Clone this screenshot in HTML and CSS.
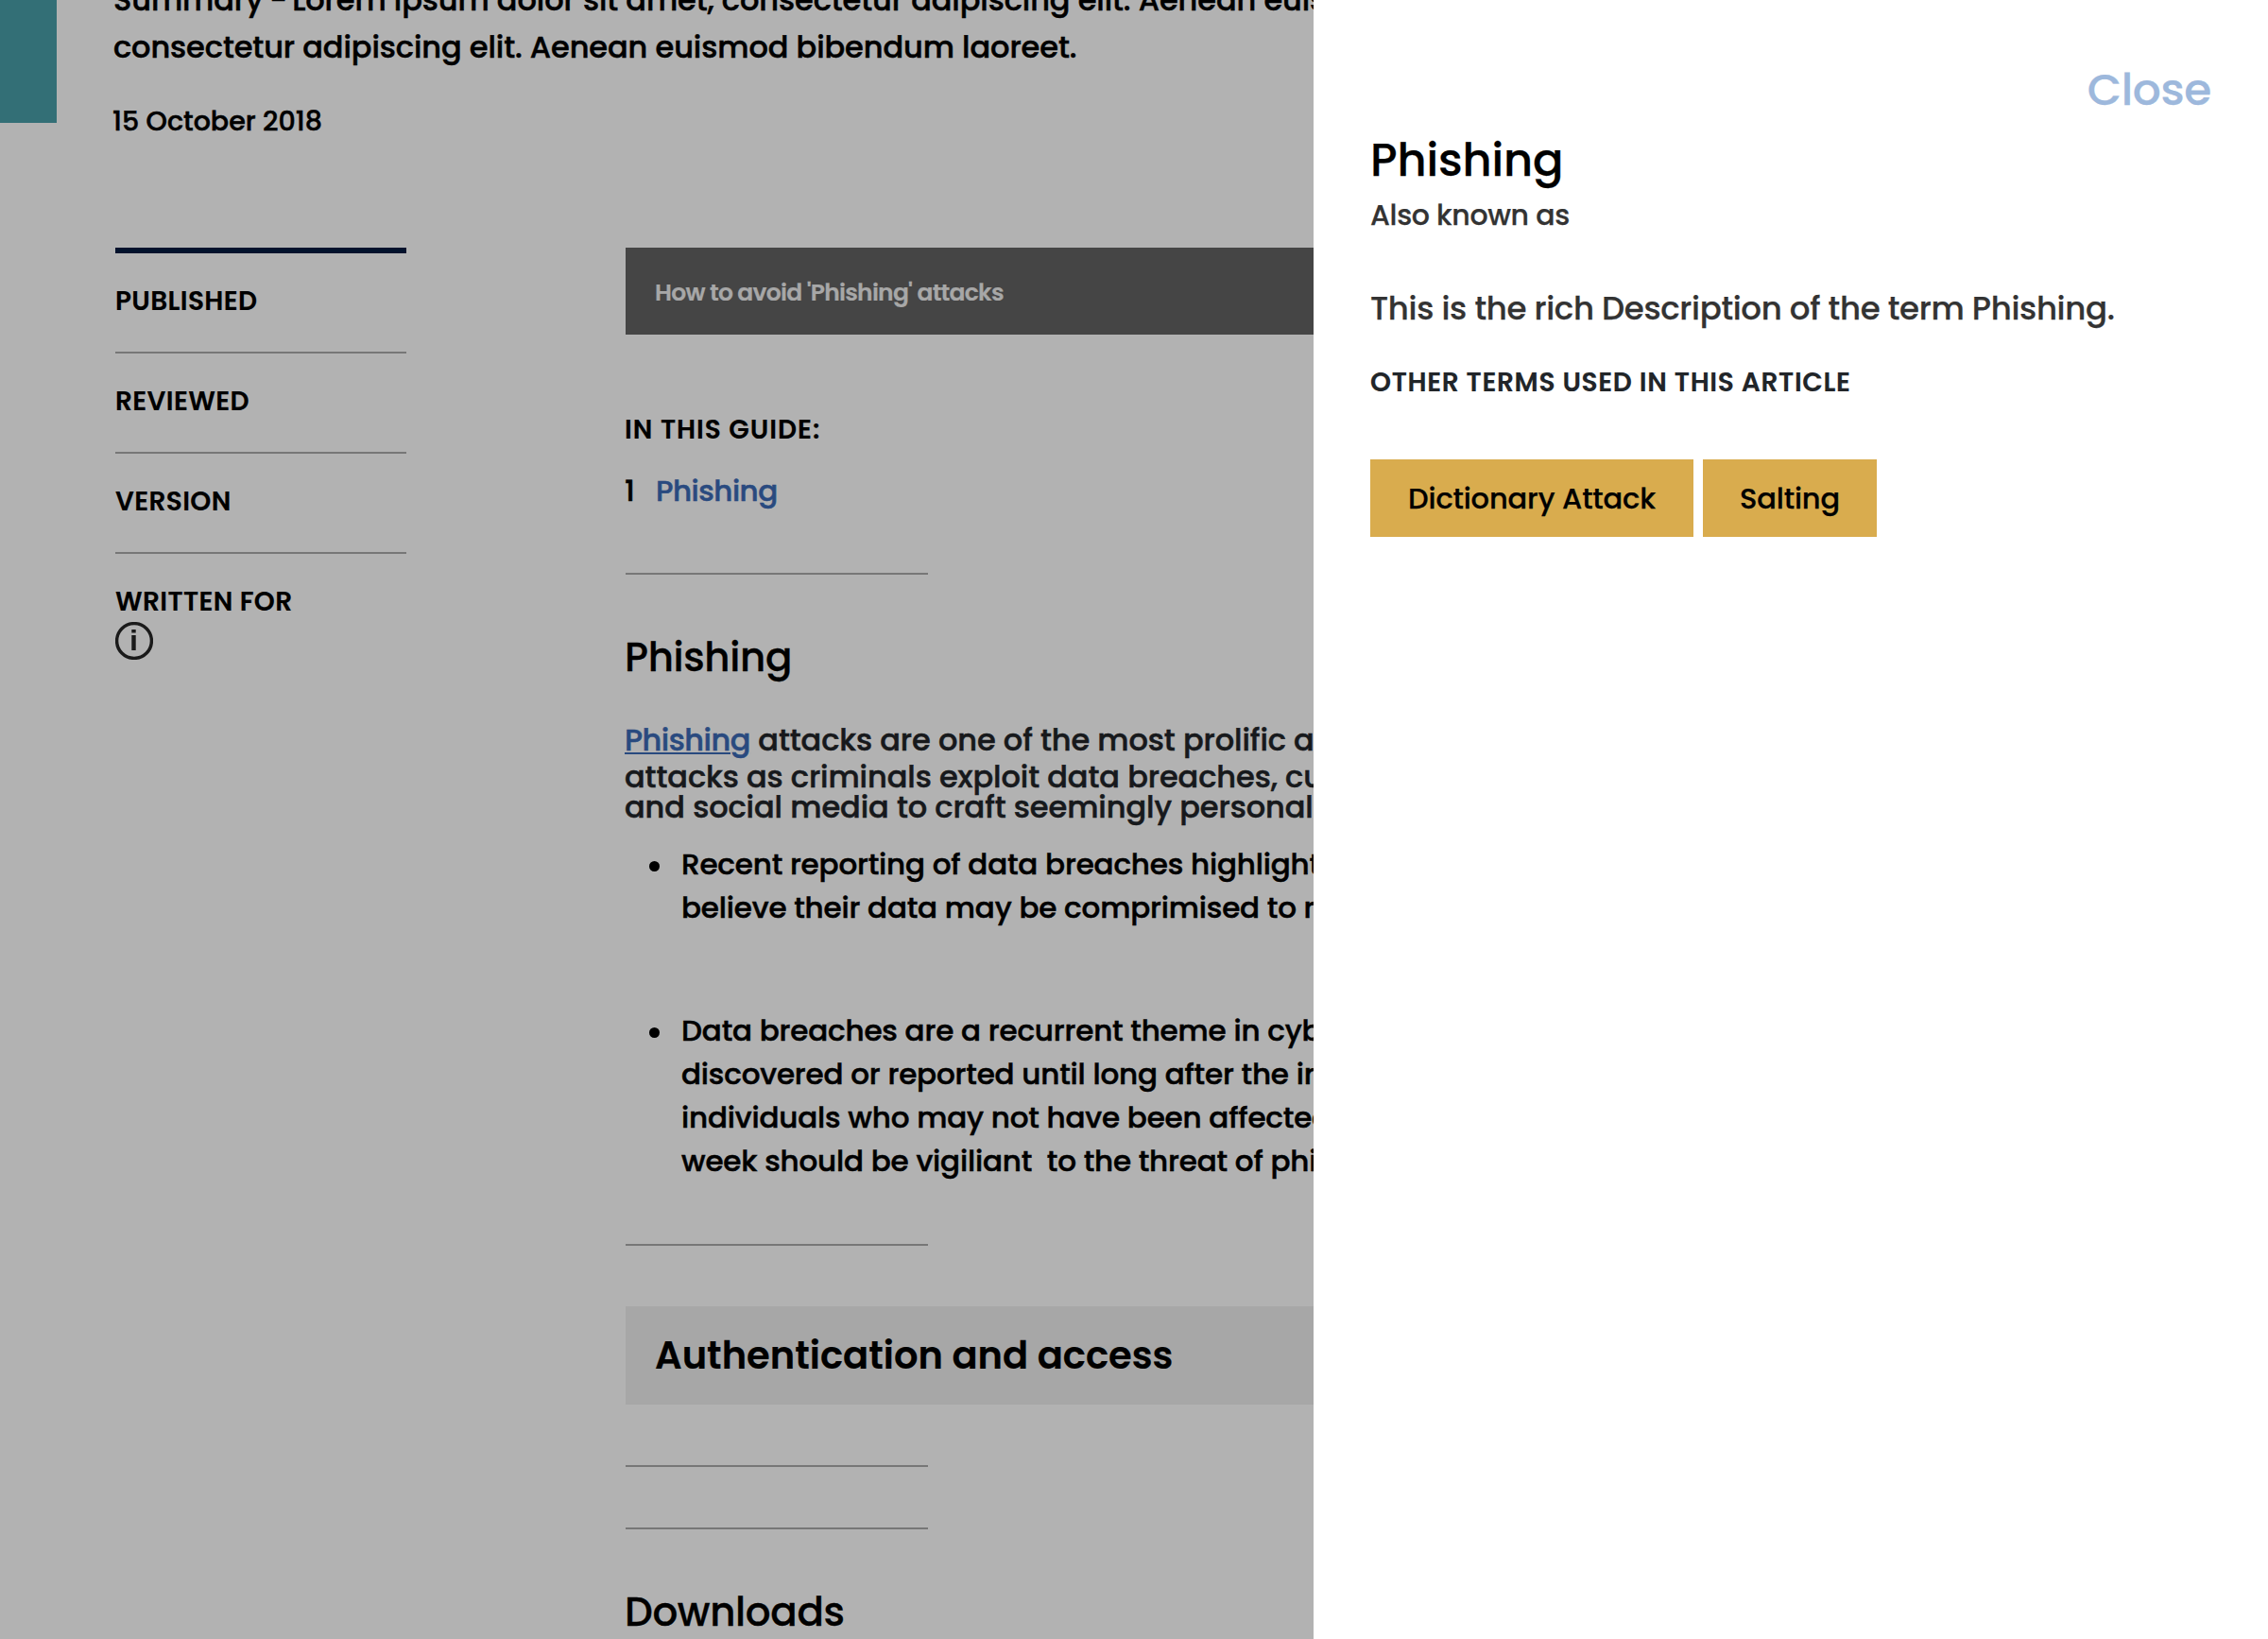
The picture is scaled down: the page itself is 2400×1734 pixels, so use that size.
FILE: index.html
```html
<!DOCTYPE html>
<html lang="en">
<head>
<meta charset="utf-8">
<title>Phishing</title>
<link rel="stylesheet" href="styles.css">
</head>
<body>
<div class="page">
  <header class="intro">
    <div class="accent"></div>
    <div class="intro-body">
      <p class="summary">Summary<span class="dash"> - </span>Lorem ipsum dolor sit amet, consectetur adipiscing elit. Aenean euismod<br>consectetur adipiscing elit. Aenean euismod bibendum laoreet.</p>
      <p class="date">15 October 2018</p>
    </div>
  </header>
  <div class="columns">
    <aside class="meta">
      <div class="meta-item">PUBLISHED</div>
      <div class="meta-item">REVIEWED</div>
      <div class="meta-item">VERSION</div>
      <div class="meta-item">WRITTEN FOR
        <svg class="info" viewBox="0 0 40 40"><circle cx="20" cy="20" r="18.4"/><path d="M19.5 14v16M19.5 8v3.6"/></svg>
      </div>
    </aside>
    <main class="article">
      <div class="banner">How to avoid 'Phishing' attacks</div>
      <h3 class="guide-title">IN THIS GUIDE:</h3>
      <ol class="guide"><li><span>1</span><a>Phishing</a></li></ol>
      <hr>
      <h2>Phishing</h2>
      <p class="lead"><span class="lead-first"><a>Phishing</a> attacks are one of the most prolific and</span><span>attacks as criminals exploit data breaches, current</span><span>and social media to craft seemingly personal</span></p>
      <ul class="points">
        <li>Recent reporting of data breaches highlight<br>believe their data may be comprimised to reset</li>
        <li>Data breaches are a recurrent theme in cyber<br>discovered or reported until long after the incident<br>individuals who may not have been affected<br>week should be vigiliant&nbsp; to the threat of phishing</li>
      </ul>
      <hr>
      <div class="topic">Authentication and access</div>
      <hr>
      <hr>
      <h2>Downloads</h2>
    </main>
  </div>
</div>
<div class="overlay"></div>
<section class="drawer">
  <a class="close">Close</a>
  <h1>Phishing</h1>
  <p class="aka">Also known as</p>
  <p class="description">This is the rich Description of the term Phishing.</p>
  <h3 class="other">OTHER TERMS USED IN THIS ARTICLE</h3>
  <div class="terms"><a class="term term-wide">Dictionary Attack</a><a class="term">Salting</a></div>
</section>
</body>
</html>
```
FILE: styles.css
```css
* { box-sizing: border-box; margin: 0; padding: 0; }
body {
  position: relative;
  width: 2400px;
  height: 1734px;
  overflow: hidden;
  background: #fff;
  color: #000;
  font-family: Poppins, Inter, "Liberation Sans", sans-serif;
  font-weight: 500;
  -webkit-text-stroke: .5px currentColor;
}
ul, ol { list-style: none; }
.page { width: 1390px; height: 1734px; overflow: hidden; white-space: nowrap; }
.intro { display: flex; gap: 60px; height: 262px; align-items: flex-start; }
.accent { flex: none; width: 60px; height: 130px; background: #499fa9; }
.summary { margin-top: -25px; font-size: 32px; line-height: 50px; letter-spacing: -.09px; }
.dash { letter-spacing: -1.6px; }
.date { margin-top: 33px; margin-left: -1px; font-size: 28.5px; line-height: 40px; }
.columns { display: flex; gap: 232px; padding-left: 122px; }
.meta { width: 308px; flex: none; border-top: 6px solid #041a40; }
.meta-item { height: 106px; padding-top: 31px; border-bottom: 2px solid #ababab; font-size: 28px; font-weight: 600; line-height: 40px; letter-spacing: .35px; -webkit-text-stroke: .15px currentColor; }
.meta-item:last-child { border-bottom: 0; height: auto; }
.info { display: block; width: 40px; height: 40px; margin-top: 1px; fill: none; stroke: #262626; stroke-width: 3.4; }
.info path { stroke-width: 4.4; }
.article { width: 1616px; flex: none; }
.banner { display: flex; align-items: center; height: 92px; padding: 3px 30px 0 31px; background: #646464; color: #efefef; font-size: 25px; font-weight: 600; letter-spacing: -.74px; -webkit-text-stroke: .15px currentColor; }
.guide-title { margin: 81px 0 0 -1px; font-size: 28px; font-weight: 600; line-height: 40px; letter-spacing: .95px; -webkit-text-stroke: .15px currentColor; }
.guide { margin: 21px 0 0 -1px; font-size: 31px; line-height: 46px; letter-spacing: -.5px; }
.guide li { display: flex; }
.guide li span { width: 33px; }
.article a { color: #3c6bb7; }
hr { width: 320px; height: 2px; margin-top: 64px; border: 0; background: #ababab; }
h2 { margin: 58px 0 0 -1px; font-size: 42px; font-weight: 500; line-height: 60px; letter-spacing: -.35px; -webkit-text-stroke: .3px currentColor; }
.lead { margin-top: 33px; color: #212529; font-size: 32px; line-height: 32px; letter-spacing: -.08px; }
.lead > span { display: block; margin-left: -1px; }
.lead .lead-first { line-height: 47px; }
.lead a { letter-spacing: -.5px; text-decoration: underline; text-decoration-thickness: 2px; text-underline-offset: 2px; }
.points { margin-top: 21px; font-size: 31px; line-height: 46px; letter-spacing: -.18px; }
.points li { position: relative; padding-left: 59px; }
.points li + li { margin-top: 84px; }
.points li::before { content: ""; position: absolute; left: 25px; top: 20px; width: 11px; height: 11px; border-radius: 50%; background: #000; }
.points + hr { margin-top: 65px; }
.topic { display: flex; align-items: center; height: 104px; margin-top: 64px; padding: 0 31px; background: #f0f0f0; font-size: 40px; font-weight: 600; letter-spacing: .02px; -webkit-text-stroke: .2px currentColor; }
.overlay { position: absolute; inset: 0; background: rgba(0, 0, 0, .3); }
.drawer { position: absolute; top: 0; right: 0; width: 1010px; height: 1734px; padding: 65px 60px 0; background: #fff; -webkit-text-stroke: .25px currentColor; }
.close { display: block; text-align: right; color: #9db8dc; font-size: 47px; line-height: 60px; letter-spacing: -.3px; }
h1 { margin-top: 10px; font-size: 48px; font-weight: 500; line-height: 70px; letter-spacing: -.15px; }
.aka { margin-top: 3px; color: #333; font-size: 30px; line-height: 40px; letter-spacing: -.35px; }
.description { margin-top: 53px; color: #333; font-size: 34px; line-height: 50px; letter-spacing: -.35px; }
.other { margin-top: 34px; color: #212529; font-size: 28px; font-weight: 600; line-height: 40px; letter-spacing: .65px; -webkit-text-stroke: .15px currentColor; }
.terms { display: flex; gap: 10px; margin-top: 61px; }
.term { display: flex; align-items: center; justify-content: center; width: 184px; height: 82px; padding-top: 1px; background: #d9ac4e; font-size: 30.5px; letter-spacing: -.15px; }
.term-wide { width: 342px; }
```
